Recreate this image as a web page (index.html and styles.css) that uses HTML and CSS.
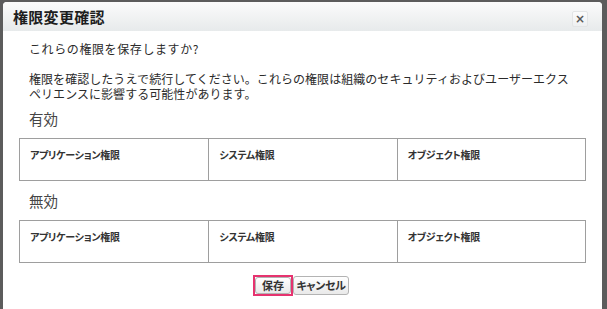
FILE: index.html
```html
<!DOCTYPE html>
<html lang="ja">
<head>
<meta charset="utf-8">
<title>権限変更確認</title>
<link rel="stylesheet" href="styles.css">
</head>
<body>
<div class="backdrop">
  <div class="dialog">
    <div class="dialog-header">
      <h2 class="dialog-title">権限変更確認</h2>
      <button class="close-btn" type="button" aria-label="閉じる">×</button>
    </div>
    <div class="dialog-body">
      <p class="question">これらの権限を保存しますか?</p>
      <p class="message">権限を確認したうえで続行してください。これらの権限は組織のセキュリティおよびユーザーエクス<br>ペリエンスに影響する可能性があります。</p>
      <h3 class="section-title">有効</h3>
      <div class="perm-table">
        <div class="perm-cell">アプリケーション権限</div>
        <div class="perm-cell">システム権限</div>
        <div class="perm-cell">オブジェクト権限</div>
      </div>
      <h3 class="section-title second">無効</h3>
      <div class="perm-table">
        <div class="perm-cell">アプリケーション権限</div>
        <div class="perm-cell">システム権限</div>
        <div class="perm-cell">オブジェクト権限</div>
      </div>
      <div class="actions">
        <span class="highlight"><button class="btn save" type="button">保存</button></span>
        <button class="btn cancel" type="button">キャンセル</button>
      </div>
    </div>
  </div>
</div>
</body>
</html>
```

FILE: styles.css
```css
html, body {
  margin: 0;
  padding: 0;
  height: 100%;
  overflow: hidden;
}
body {
  background: #5c5c5c;
  font-family: "Noto Sans CJK JP", "Noto Sans", sans-serif;
  color: #2b2b2b;
}
.backdrop {
  padding: 2px 0 0 3px;
}
.dialog {
  width: 599px;
  min-height: 340px;
  background: #fff;
  border-radius: 4px 4px 0 0;
  overflow: hidden;
}
.dialog-header {
  height: 29px;
  display: flex;
  justify-content: space-between;
  align-items: flex-start;
  background: linear-gradient(#fbfbfb, #e7eaeb);
  border-bottom: 1px solid #ffffff;
}
.dialog-title {
  margin: 0 0 0 10px;
  font-size: 15px;
  line-height: 29px;
  font-weight: bold;
  color: #1e1e1e;
  letter-spacing: 0.3px;
}
.close-btn {
  margin: 9px 14px 0 0;
  width: 16px;
  height: 16px;
  padding: 0;
  border: 1px solid #e3e5e6;
  border-radius: 2px;
  background: linear-gradient(#fbfbfb, #eef0f1);
  color: #5a5a5a;
  font-family: "DejaVu Sans", sans-serif;
  font-size: 12px;
  font-weight: bold;
  line-height: 13px;
  text-align: center;
}
.dialog-body {
  padding: 0 16px;
}
.question {
  margin: 10px 0 0 10px;
  font-size: 12px;
  line-height: 14px;
  letter-spacing: 0.6px;
}
.message {
  margin: 15px 0 0 10px;
  font-size: 12px;
  line-height: 15px;
  letter-spacing: 0.05px;
}
.section-title {
  margin: 9px 0 0 10px;
  font-size: 14.5px;
  line-height: 18px;
  font-weight: normal;
  color: #454545;
}
.section-title.second {
  margin-top: 11px;
}
.perm-table {
  margin-top: 10px;
  display: grid;
  grid-template-columns: 1fr 1fr 1fr;
  border: 1px solid #9e9e9e;
  height: 41px;
}
.perm-cell {
  padding: 9px 0 0 10px;
  font-size: 10px;
  line-height: 14px;
  font-weight: bold;
  color: #333;
  letter-spacing: -0.3px;
  font-feature-settings: "palt";
}
.perm-cell + .perm-cell {
  border-left: 1px solid #9e9e9e;
}
.actions {
  margin-top: 12px;
  display: flex;
  justify-content: center;
  align-items: center;
  padding-right: 3px;
}
.highlight {
  display: flex;
  border: 2px solid #e6336f;
}
.btn {
  margin: 0;
  padding: 0;
  border: 1px solid #b3b3b3;
  border-radius: 3px;
  background: linear-gradient(#ffffff, #e9e9e9);
  font-family: "Noto Sans CJK JP", sans-serif;
  font-size: 11px;
  font-weight: bold;
  color: #333;
  line-height: 15px;
  font-feature-settings: "palt";
}
.save {
  width: 36px;
  height: 17px;
}
.cancel {
  width: 56px;
  height: 19px;
  letter-spacing: -0.3px;
}
```
